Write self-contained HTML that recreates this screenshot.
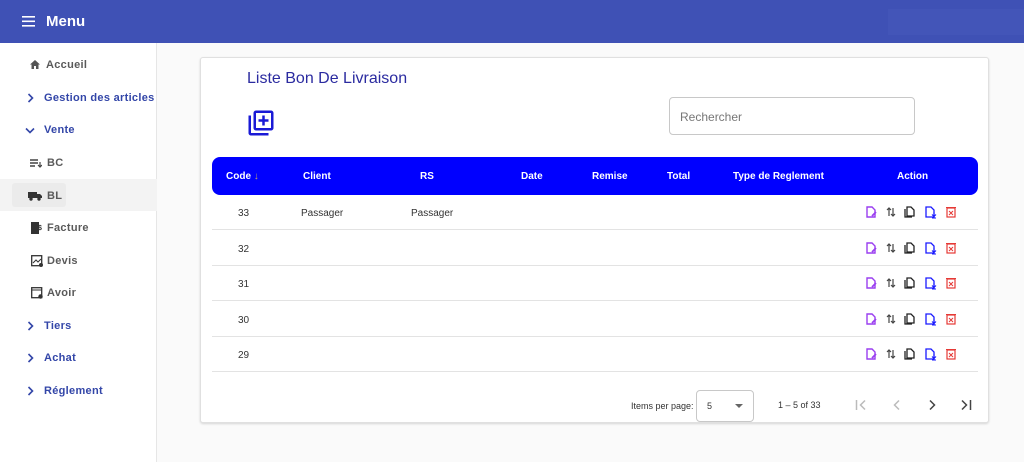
<!DOCTYPE html>
<html><head><meta charset="utf-8"><style>
*{box-sizing:border-box;margin:0;padding:0}
body{width:1024px;height:462px;overflow:hidden;font-family:"Liberation Sans",sans-serif;background:#fafafa;position:relative}
.hdr{position:absolute;left:0;top:0;width:1024px;height:43px;background:#3f51b5}
.hdr .t{position:absolute;left:46px;top:13px;color:#fff;font-size:15px;font-weight:bold}
.hdr .box{position:absolute;left:888px;top:9px;width:136px;height:26px;background:#4355b8}
.side{position:absolute;left:0;top:43px;width:157px;height:419px;background:#fff;border-right:1px solid #e6e6e6}
.it{position:absolute;left:0;width:157px;font-size:11px;font-weight:bold;letter-spacing:.3px}
.g{color:#5a5a5a}.b{color:#3346a8}
.it svg{position:absolute}
.card{position:absolute;left:200px;top:57px;width:789px;height:366px;background:#fff;border:1px solid #e0e0e0;border-radius:3px;box-shadow:0 1px 2px rgba(0,0,0,.15)}
.ttl{position:absolute;left:46px;top:12px;font-size:16px;color:#2b2ba0}
.srch{position:absolute;left:468px;top:39px;width:246px;height:38px;border:1px solid #c8c8c8;border-radius:4px;font-size:12px;color:#777;padding:12px 10px}
.th{position:absolute;left:11px;top:99px;width:766px;height:38px;background:#0000ff;border-radius:8px;color:#fff;font-size:10px;font-weight:bold}
.th span,.row span{position:absolute;top:14px}
.row{position:absolute;left:11px;width:766px;height:35px;border-bottom:1px solid #e3e3e3;font-size:10px;color:#333}
.row span{top:13px}
.ac{position:absolute;top:11px}
.pg{position:absolute;font-size:9px;color:#333}
</style></head><body>
<div class="hdr">
<svg style="position:absolute;left:22px;top:16px" width="13" height="11"><rect y="0" width="13" height="1.6" fill="#fff"/><rect y="4.5" width="13" height="1.6" fill="#fff"/><rect y="9" width="13" height="1.6" fill="#fff"/></svg>
<div class="t">Menu</div><div class="box"></div></div>
<div class="side">
<div style="position:absolute;left:0;top:136px;width:157px;height:32px;background:#f3f3f3"></div>
<div style="position:absolute;left:12px;top:140px;width:54px;height:24px;background:#ebebeb;border-radius:3px"></div>
<div class="it g" style="top:16px"><svg style="left:30px;top:1px" width="10" height="9"><path d="M5 0L0 4.5h1.5V9h2.5V6h2v3h2.5V4.5H10z" fill="#555"/></svg><span style="position:absolute;left:46px">Accueil</span></div>
<div class="it b" style="top:49px"><svg style="left:27px;top:1px" width="7" height="10"><path d="M1.5 1l4 4-4 4" stroke="#3346a8" stroke-width="1.6" fill="none"/></svg><span style="position:absolute;left:44px">Gestion des articles</span></div>
<div class="it b" style="top:81px"><svg style="left:25px;top:3px" width="10" height="7"><path d="M1 1.5l4 4 4-4" stroke="#3346a8" stroke-width="1.6" fill="none"/></svg><span style="position:absolute;left:44px">Vente</span></div>
<div class="it g" style="top:114px"><svg style="left:30px;top:2px" width="12" height="9"><path d="M0 1h8M0 4h8M0 7h5" stroke="#444" stroke-width="1.4"/><path d="M10 3v5M8 6l2 2 2-2" stroke="#444" stroke-width="1.2" fill="none"/></svg><span style="position:absolute;left:47px">BC</span></div>
<div class="it g" style="top:147px"><svg style="left:28px;top:1px" width="14" height="10"><rect x="0" y="1" width="9" height="6" fill="#333"/><path d="M9 3h3l2 2v2h-5z" fill="#333"/><circle cx="3" cy="8" r="1.7" fill="#333"/><circle cx="11" cy="8" r="1.7" fill="#333"/></svg><span style="position:absolute;left:47px">BL</span></div>
<div class="it g" style="top:179px"><svg style="left:31px;top:0" width="11" height="12"><rect x="0" y="0" width="8" height="12" fill="#333"/><text x="7" y="8" font-size="7" fill="#333">$</text></svg><span style="position:absolute;left:47px">Facture</span></div>
<div class="it g" style="top:212px"><svg style="left:31px;top:0" width="12" height="12"><rect x=".7" y=".7" width="10" height="10" fill="none" stroke="#333" stroke-width="1.3"/><path d="M2 8l3-3 2 2 3-3" stroke="#333" fill="none"/><circle cx="10" cy="10" r="2" fill="#333"/></svg><span style="position:absolute;left:47px">Devis</span></div>
<div class="it g" style="top:244px"><svg style="left:31px;top:0" width="12" height="12"><rect x=".7" y=".7" width="10" height="10" fill="none" stroke="#333" stroke-width="1.3"/><path d="M1 3h10" stroke="#333"/><circle cx="9.5" cy="9.5" r="2.2" fill="#333"/></svg><span style="position:absolute;left:47px">Avoir</span></div>
<div class="it b" style="top:277px"><svg style="left:27px;top:1px" width="7" height="10"><path d="M1.5 1l4 4-4 4" stroke="#3346a8" stroke-width="1.6" fill="none"/></svg><span style="position:absolute;left:44px">Tiers</span></div>
<div class="it b" style="top:309px"><svg style="left:27px;top:1px" width="7" height="10"><path d="M1.5 1l4 4-4 4" stroke="#3346a8" stroke-width="1.6" fill="none"/></svg><span style="position:absolute;left:44px">Achat</span></div>
<div class="it b" style="top:342px"><svg style="left:27px;top:1px" width="7" height="10"><path d="M1.5 1l4 4-4 4" stroke="#3346a8" stroke-width="1.6" fill="none"/></svg><span style="position:absolute;left:44px">Réglement</span></div>
</div>
<div class="card">
<div class="ttl">Liste Bon De Livraison</div>
<svg style="position:absolute;left:45px;top:50px" width="30" height="30" viewBox="0 0 24 24"><path d="M4 6H2v14c0 1.1.9 2 2 2h14v-2H4V6zm16-4H8c-1.1 0-2 .9-2 2v12c0 1.1.9 2 2 2h12c1.1 0 2-.9 2-2V4c0-1.1-.9-2-2-2zm0 14H8V4h12v12zm-7-2h2v-3h3V9h-3V6h-2v3h-3v2h3z" fill="#1a1ad6"/></svg>
<div class="srch">Rechercher</div>
<div class="th"><span style="left:14px">Code <b style="color:#b8a070">↓</b></span><span style="left:91px">Client</span><span style="left:208px">RS</span><span style="left:309px">Date</span><span style="left:380px">Remise</span><span style="left:455px">Total</span><span style="left:521px">Type de Reglement</span><span style="left:685px">Action</span></div>
<div id="rows"></div>
<div class="pg" style="left:430px;top:343px">Items per page:</div>
<div style="position:absolute;left:495px;top:332px;width:58px;height:32px;border:1px solid #c8c8c8;border-radius:4px"><span class="pg" style="left:10px;top:10px">5</span><span style="position:absolute;left:38px;top:13px;border:4px solid transparent;border-top:4px solid #666"></span></div>
<div class="pg" style="left:577px;top:342px">1 – 5 of 33</div>
<svg style="position:absolute;left:654px;top:341px" width="12" height="12"><path d="M1.5 1v10M10 1.5L5.5 6l4.5 4.5" stroke="#bbb" stroke-width="1.5" fill="none"/></svg>
<svg style="position:absolute;left:690px;top:341px" width="12" height="12"><path d="M8 1.5L3.5 6 8 10.5" stroke="#bbb" stroke-width="1.5" fill="none"/></svg>
<svg style="position:absolute;left:725px;top:341px" width="12" height="12"><path d="M4 1.5L8.5 6 4 10.5" stroke="#444" stroke-width="1.5" fill="none"/></svg>
<svg style="position:absolute;left:759px;top:341px" width="12" height="12"><path d="M10.5 1v10M2 1.5L6.5 6 2 10.5" stroke="#444" stroke-width="1.5" fill="none"/></svg>
</div>
<script>
var codes=[33,32,31,30,29],h='';
var ic='<svg class="ac" style="left:654px" width="11" height="12"><path d="M1 1h5l3 3v7H1z" fill="none" stroke="#9a3ff0" stroke-width="1.4"/><path d="M6 10l4-4" stroke="#9a3ff0" stroke-width="1.8"/></svg>'+
'<svg class="ac" style="left:674px" width="10" height="12"><path d="M3 10V2M1 4l2-2 2 2M7 2v8M5 8l2 2 2-2" stroke="#444" stroke-width="1.2" fill="none"/></svg>'+
'<svg class="ac" style="left:692px" width="11" height="12"><path d="M1 3v8h7" fill="none" stroke="#222" stroke-width="1.3"/><path d="M3 1h4l3 3v6H3z" fill="none" stroke="#222" stroke-width="1.3"/></svg>'+
'<svg class="ac" style="left:713px" width="12" height="13"><path d="M1 1h5l3 3v7H1z" fill="none" stroke="#1a1aff" stroke-width="1.3"/><path d="M9 6v4M7 8.5l2 2 2-2M7 12h4" stroke="#1a1aff" stroke-width="1.1" fill="none"/></svg>'+
'<svg class="ac" style="left:734px" width="10" height="12"><rect x="1" y="2" width="8" height="9" fill="none" stroke="#e53935" stroke-width="1.2"/><path d="M0 1.5h10M3 5l4 4M7 5l-4 4" stroke="#e53935" stroke-width="1"/></svg>';
codes.forEach(function(c,i){h+='<div class="row" style="top:'+(137+i*35.5)+'px"><span style="left:26px">'+c+'</span>'+(i==0?'<span style="left:89px">Passager</span><span style="left:199px">Passager</span>':'')+ic+'</div>'});
document.getElementById('rows').innerHTML=h;
</script>
</body></html>
